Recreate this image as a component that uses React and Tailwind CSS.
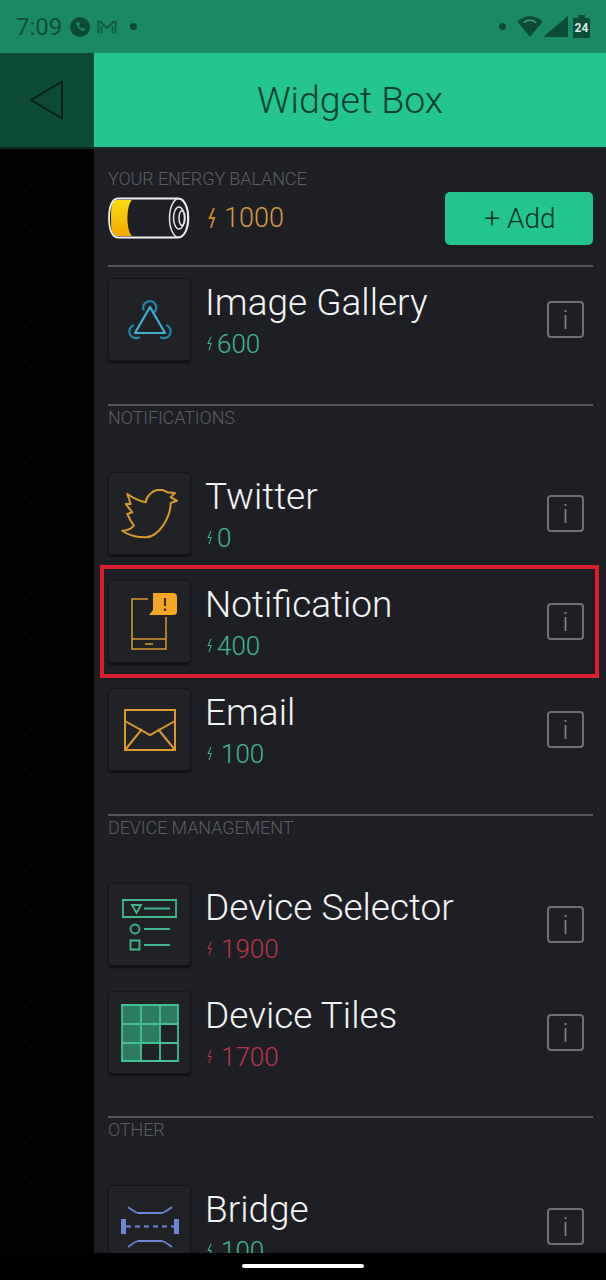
const FONT = "font-['Roboto','Liberation_Sans',sans-serif]";

function Bolt({ color, w = 8, h = 16, sw = 1.3 }) {
  return (
    <svg width={w} height={h} viewBox="0 0 8 16" preserveAspectRatio="none" fill="none" stroke={color} strokeWidth={sw}>
      <path d="M5.500 .8 1.500 8h4L2.500 15.200" strokeLinejoin="miter" />
    </svg>
  );
}

function Tile({ children }) {
  return (
    <div className="w-[83px] h-[83px] shrink-0 rounded-[4px] bg-[#212226] border border-[#141518] shadow-[0_2px_2px_#0e0f11] flex items-center justify-center">
      {children}
    </div>
  );
}

function InfoBox() {
  return (
    <div className="w-[37px] h-[37px] shrink-0 rounded-[4px] border-2 border-[#6f7072] flex items-center justify-center text-[#85868a] text-[26px] font-light leading-none">
      i
    </div>
  );
}

function Row({ title, cost, color, children, height = "h-[108px]", boltGap = "mr-[4px]" }) {
  return (
    <div className={`${height} flex items-start`}>
      <Tile>{children}</Tile>
      <div className="ml-[14px] flex-1 min-w-0 flex flex-col mt-[1px]">
        <div className="text-[37px] leading-[48px] font-light text-[#f4f5f5]">{title}</div>
        <div className="flex items-center h-[31px] mt-[1px] pl-[2px]" style={{ color }}>
          <span className={`${boltGap} flex`}><Bolt color={color} w={6} h={15} /></span>
          <span className="text-[26px] leading-none font-light">{cost}</span>
        </div>
      </div>
      <div className="mt-[23px]"><InfoBox /></div>
    </div>
  );
}

function Section({ label, height = "h-[68px]" }) {
  return (
    <div className={`${height} border-t-2 border-[#55565a] mr-[-9px] text-[18px] leading-[20px] pt-[2px] font-light text-[#5c5e64] tracking-[-0.1px]`}>
      {label}
    </div>
  );
}

const amber = "#d99a2b";
const teal = "#3fb98d";

export default function App() {
  return (
    <div className={`${FONT} w-[606px] h-[1280px] overflow-hidden flex flex-col bg-black`}>
      <div className="h-[53px] shrink-0 bg-[#1b8a64] flex items-center justify-between pl-[16px] pr-[16px] text-[#0e4f3b]">
        <div className="flex items-center">
          <span className="text-[24px] leading-none">7:09</span>
          <svg className="ml-[8px]" width="20" height="20" viewBox="0 0 20 20">
            <circle cx="10" cy="10" r="10" fill="#0d4a37" />
            <path d="M6.500 5.500c-.5 4 3.500 8.500 8 8.500l.5-2.500-2.500-1-1 1c-1.200-.6-2.200-1.700-2.600-2.900l1-1L9.300 5z" fill="#1b8a64" />
          </svg>
          <svg className="ml-[7px]" width="20" height="16" viewBox="0 0 22 16" fill="none" stroke="#0e5a43" strokeWidth="2">
            <path d="M1.500 15V2h2l7.500 7 7.500-7h2v13M5 15V7M17 15V7" />
          </svg>
          <span className="ml-[13px] w-[7px] h-[7px] rounded-full bg-[#0d4a37]" />
        </div>
        <div className="flex items-center">
          <span className="w-[7px] h-[7px] rounded-full bg-[#0d4a37]" />
          <svg className="ml-[11px]" width="26" height="21" viewBox="0 0 24 20">
            <path d="M0 5.500C6-1.500 18-1.500 24 5.500L12 20z" fill="#0d4a37" />
            <path d="M6 6.500C9 3 15 3 18 6.500" stroke="#4f9f83" strokeWidth="1.200" fill="none" />
          </svg>
          <svg className="ml-[0px]" width="25" height="22" viewBox="0 0 22 22" preserveAspectRatio="none">
            <path d="M22 0v21H0z" fill="#0d4a37" />
          </svg>
          <div className="relative ml-[5px] w-[17px] h-[23px]">
            <div className="absolute left-[5px] top-0 w-[7px] h-[3px] bg-[#0d4a37]" />
            <div className="absolute left-0 top-[3px] w-[17px] h-[20px] bg-[#0d4a37] flex items-center justify-center text-[12px] font-bold text-[#d8ede5] leading-none">24</div>
          </div>
        </div>
      </div>

      <div className="h-[96px] shrink-0 flex border-b-[2px] border-[#0e2a24]">
        <div className="w-[94px] bg-[#0d4a37] flex items-center justify-center pr-[1px]">
          <svg width="36" height="40" viewBox="0 0 36 40" fill="none" stroke="#0a1f1a" strokeWidth="2" strokeLinejoin="round">
            <path d="M33 1.500V38.500L2 20z" />
          </svg>
        </div>
        <div className="flex-1 bg-[#23c68f] flex items-center justify-center text-[37.500px] font-light text-[#0e3d30]">
          Widget Box
        </div>
      </div>

      <div className="flex-1 min-h-0 flex">
        <div className="w-[94px] shrink-0 bg-[#020203] bg-[radial-gradient(#0e0e0e_1px,transparent_1px)] bg-[length:17px_17px]" />
        <div className="flex-1 bg-[#1e1f24] overflow-hidden pl-[14px] pr-[22px] pt-[20px]">
          <div className="text-[18px] leading-[20px] font-light text-[#5c5e64] tracking-[-0.1px]">YOUR ENERGY BALANCE</div>
          <div className="h-[76px] flex items-start mr-[-9px]">
            <div className="flex items-center mt-[8px]">
              <svg width="82" height="42" viewBox="0 0 82 42" fill="none">
                <defs>
                  <linearGradient id="bat" x1="0" y1="0" x2="0" y2="1">
                    <stop offset="0" stopColor="#f8dc10" />
                    <stop offset="1" stopColor="#f5a800" />
                  </linearGradient>
                </defs>
                <path d="M9 3h15c-6 6-6 30 0 36H9C4 39 3 34 3 21S4 3 9 3z" fill="url(#bat)" />
                <path d="M10 1.500H70C76 1.500 80 10 80 21s-4 19.500-10 19.500H10C4 40.500 1 32 1 21S4 1.500 10 1.500z" stroke="#f0f0f0" strokeWidth="1.800" />
                <ellipse cx="71" cy="21" rx="9.500" ry="19.500" stroke="#e8e8e8" strokeWidth="1.500" />
                <ellipse cx="71" cy="21" rx="5.500" ry="11" stroke="#e8e8e8" strokeWidth="1.500" />
                <ellipse cx="74" cy="21" rx="3" ry="7.500" stroke="#e8e8e8" strokeWidth="1.500" />
              </svg>
              <span className="ml-[18px] mr-[7px] flex"><Bolt color="#d08a28" w={9} h={22} sw={1.500} /></span>
              <span className="text-[27px] font-light leading-none text-[#d99a3e]">1000</span>
            </div>
            <div className="ml-auto mt-[3px] w-[148px] h-[53px] rounded-[5px] bg-[#23c68f] flex items-center justify-center text-[28px] font-light text-[#0c3025] pl-[2px]">
              + Add
            </div>
          </div>
          <Section label="" height="h-[13px]" />
          <Row title="Image Gallery" cost="600" color={teal} height="h-[126px]">
            <svg width="46" height="40" viewBox="0 0 46 40" fill="none" strokeLinecap="round">
              <g stroke="#1f86ad" strokeWidth="2.200">
                <path d="M16.500 9.500a6.500 6.500 0 1 1 11.500 2" />
                <path d="M12 37.500a6.500 6.500 0 0 1-6-12" />
                <path d="M34 37.500a6.500 6.500 0 0 0 6-12" />
              </g>
              <path d="M23 7 8 33h30z" stroke="#3fb0d4" strokeWidth="2.200" strokeLinejoin="round" />
            </svg>
          </Row>
          <Section label="NOTIFICATIONS" />
          <Row title="Twitter" cost="0" color={teal}>
            <svg width="58" height="50" viewBox="0 0 58 50" fill="none" stroke={amber} strokeWidth="2" strokeLinejoin="round">
              <path d="M6.300 5C12 9 18 12 24.700 13.300 25 8 31 1 38 .7c3 0 6 .8 8.300 2.600L54 4l-4.300 4.300 6.300 3.400-6.300 2.300C49.500 28 38 48.300 24.700 48.300c-8.700 0-17.700-2.300-23.400-6.600 4.700 0 8.700-1.700 11.700-5l-3.300-5-3.400-6.700 5-1.700-6.600-8.300h5z" />
            </svg>
          </Row>
          <div className="relative">
            <div className="absolute left-[-8px] top-[-15px] w-[499px] h-[113px] border-[4px] border-[#d9202f] pointer-events-none" />
            <Row title="Notification" cost="400" color={teal}>
              <svg className="ml-[9px]" width="46" height="57" viewBox="0 0 46 57" fill="none" stroke={amber} strokeWidth="1.500">
                <path d="M17 6H1v50h34V24M1 46h34M14 51h8" />
                <path d="M22 0h20q4 0 4 4v15q0 3-4 3H18l4-5z" fill="#f5a623" stroke="none" />
                <path d="M34 5v8M34 15.500v2.500" stroke="#3b3020" strokeWidth="2.200" />
              </svg>
            </Row>
          </div>
          <Row title="Email" cost="100" color={teal} height="h-[126px]" boltGap="mr-[8px]">
            <svg width="52" height="42" viewBox="0 0 52 42" fill="none" stroke={amber} strokeWidth="2">
              <path d="M1 1h50v40H1zM1 12l25 14 25-14M1 41l17-21M51 41 34 20" />
            </svg>
          </Row>
          <Section label="DEVICE MANAGEMENT" height="h-[69px]" />
          <Row title="Device Selector" cost="1900" color="#b8354a" boltGap="mr-[8px]">
            <svg width="56" height="52" viewBox="0 0 56 52" fill="none" stroke={teal} strokeWidth="1.800">
              <path d="M1 1h53v17H1zM22 9.500h26M22 30h26M22 46h26" />
              <path d="M10 6h9l-4.500 8z" />
              <circle cx="13" cy="30" r="4.500" />
              <path d="M8.500 41.500h9v9h-9z" />
            </svg>
          </Row>
          <Row title="Device Tiles" cost="1700" color="#b8354a" height="h-[125px]" boltGap="mr-[8px]">
            <svg width="58" height="58" viewBox="0 0 58 58" fill="none">
              <path d="M1 1h56v18H39v19H20v19H1z" fill="#2d7c62" />
              <path d="M1 1h56v56H1zM20 1v56M39 1v56M1 20h56M1 39h56" stroke="#44c097" strokeWidth="1.800" />
            </svg>
          </Row>
          <Section label="OTHER" height="h-[69px]" />
          <Row title="Bridge" cost="100" color={teal} boltGap="mr-[8px]">
            <svg width="58" height="42" viewBox="0 0 58 42" fill="none" stroke="#6d86d8">
              <path d="M7 1c3 2 6 5 10 6h24c4-1 7-4 10-6M7 41c3-2 6-5 10-6h24c4 1 7 4 10 6" strokeWidth="1.800" />
              <path d="M0 13h5v15H0zM53 13h5v15h-5z" fill="#6d86d8" strokeWidth="0" />
              <path d="M5 20.500h48" strokeWidth="1.800" strokeDasharray="5 4" />
            </svg>
          </Row>
        </div>
      </div>

      <div className="h-[27px] shrink-0 bg-black flex items-center justify-center pb-[1px]">
        <div className="w-[122px] h-[4px] rounded-full bg-white" />
      </div>
    </div>
  );
}
